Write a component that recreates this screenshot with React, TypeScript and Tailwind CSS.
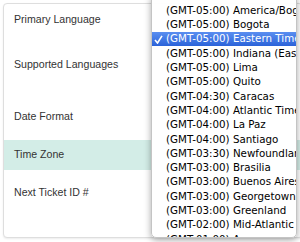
const zones = [
  "(GMT-05:00) America/Bogota",
  "(GMT-05:00) Bogota",
  "(GMT-05:00) Eastern Time (US & Canada)",
  "(GMT-05:00) Indiana (East)",
  "(GMT-05:00) Lima",
  "(GMT-05:00) Quito",
  "(GMT-04:30) Caracas",
  "(GMT-04:00) Atlantic Time (Canada)",
  "(GMT-04:00) La Paz",
  "(GMT-04:00) Santiago",
  "(GMT-03:30) Newfoundland",
  "(GMT-03:00) Brasilia",
  "(GMT-03:00) Buenos Aires",
  "(GMT-03:00) Georgetown",
  "(GMT-03:00) Greenland",
  "(GMT-02:00) Mid-Atlantic",
  "(GMT-01:00) Azores",
];

const selected = "(GMT-05:00) Eastern Time (US & Canada)";

function Label({ text, className }: { text: string; className: string }) {
  return (
    <div className={`flex items-center pl-[10px] text-[10.6px] text-[#333] ${className}`}>
      {text}
    </div>
  );
}

export default function App() {
  return (
    <div
      className="relative h-[242px] w-[300px] overflow-hidden bg-white"
      style={{ fontFamily: '"Liberation Sans", Arial, sans-serif' }}
    >
      <div className="ml-[3px] mt-[3px] flex h-[235px] w-[300px] flex-col overflow-hidden rounded-[4px] border border-[#dedede] bg-white shadow-[0_1px_2px_rgba(0,0,0,0.08)]">
        <Label text="Primary Language" className="h-[32px]" />
        <Label text="Supported Languages" className="h-[58px]" />
        <Label text="Date Format" className="h-[46px]" />
        <Label text="Time Zone" className="h-[30px] bg-[#d3ede7]" />
        <Label text="Next Ticket ID #" className="h-[46px]" />
      </div>

      <div
        className="absolute left-[151px] top-[-4px] h-[242px] w-[146px] overflow-hidden rounded-b-[5px] border border-[#c4c4c4] bg-white/[0.97] pt-[6.4px] shadow-[0_2px_7px_rgba(0,0,0,0.35)]"
        style={{ fontFamily: '"DejaVu Sans", Verdana, sans-serif' }}
      >
        {zones.map((z) => {
          const active = z === selected;
          return (
            <div
              key={z}
              className={`relative flex h-[14.3px] items-center whitespace-nowrap pl-[14px] text-[10.3px] ${
                active ? "bg-gradient-to-b from-[#5a8ef0] to-[#2b63d9] text-white" : "text-black"
              }`}
            >
              {active ? (
                <svg className="absolute left-[2px] top-[3px]" width="9" height="9" viewBox="0 0 9 9">
                  <path d="M1 5 L3.5 8 L8 0.8" fill="none" stroke="white" strokeWidth="1.6" />
                </svg>
              ) : null}
              {z}
            </div>
          );
        })}
      </div>
    </div>
  );
}
